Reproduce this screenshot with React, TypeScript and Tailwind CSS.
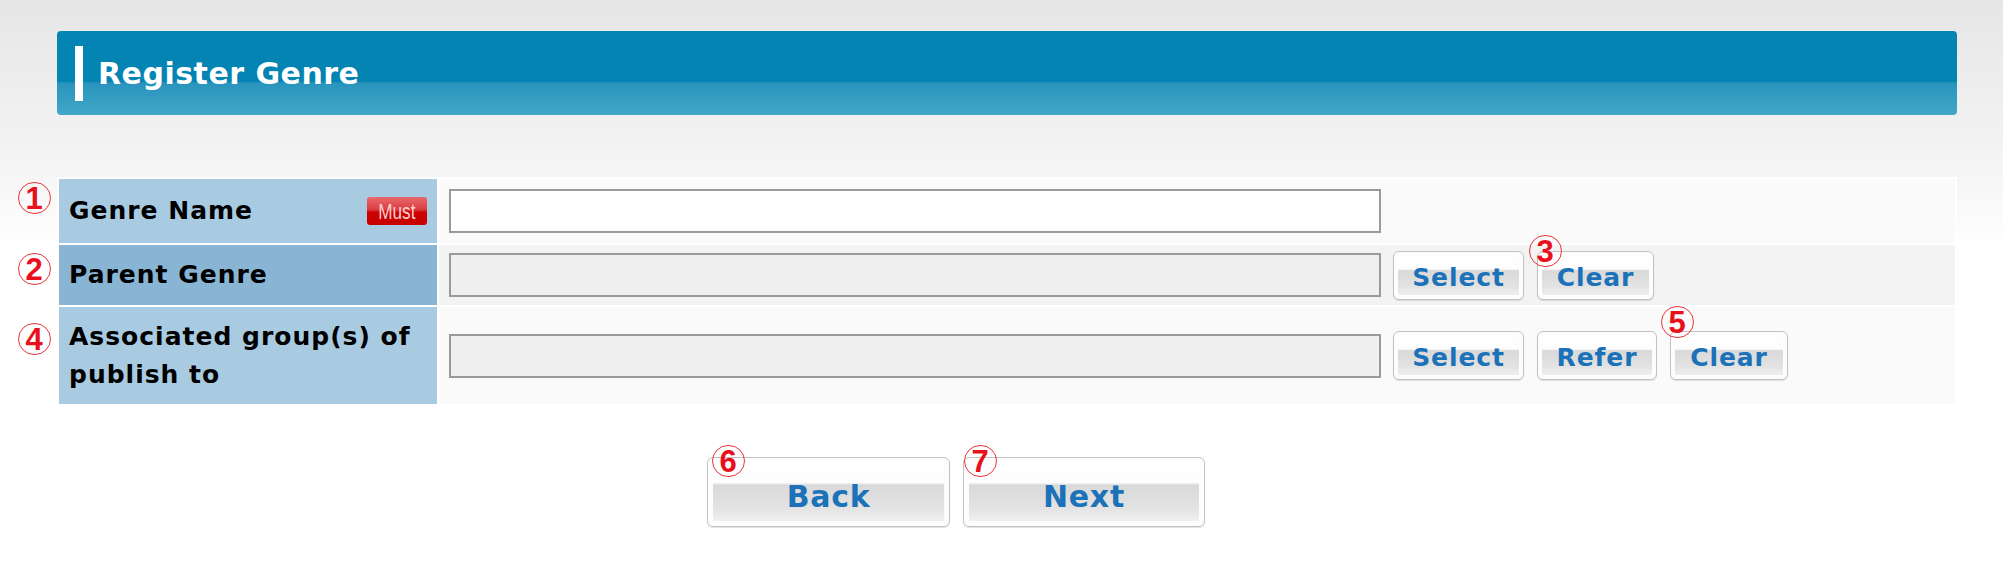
const BTN =
  "relative flex items-center justify-center rounded-[6px] border border-[#c2c2c2] bg-[linear-gradient(180deg,#ffffff_0%,#fdfdfd_36%,#d9d9d9_40%,#e2e2e2_72%,#f4f4f4_100%)] shadow-[inset_0_0_0_4px_#fdfdfd,0_1px_1px_rgba(0,0,0,0.12)] font-bold text-[#1c72b8]";

function Mark({ n, className }: { n: string; className: string }) {
  return (
    <span
      className={`absolute flex h-[32px] w-[33px] items-center justify-center rounded-full border border-[#e8343c] pt-[1px] font-['Liberation_Sans',sans-serif] text-[31px] font-bold leading-none text-[#e8101c] ${className}`}
    >
      {n}
    </span>
  );
}

function SmallButton({ label, width, mark }: { label: string; width: string; mark?: React.ReactNode }) {
  return (
    <button className={`${BTN} ${width} h-[49px] pt-[5px] text-[25px] tracking-[0.9px]`}>
      {mark}
      {label}
    </button>
  );
}

function Field({ readOnly }: { readOnly?: boolean }) {
  return (
    <input
      readOnly={readOnly}
      className={`h-[44px] w-[932px] border-2 border-[#9a9a9a] outline-none ${
        readOnly ? "bg-[#efefef]" : "bg-white"
      }`}
    />
  );
}

export default function App() {
  return (
    <div className="min-h-[587px] w-full bg-[linear-gradient(180deg,#e6e6e6_0px,#f5f5f5_170px,#fdfdfd_235px,#ffffff_250px)] pt-[31px] font-['DejaVu_Sans',sans-serif]">
      <div className="ml-[57px] flex h-[84px] w-[1900px] items-center rounded-[4px] bg-[linear-gradient(180deg,#0384b3_0%,#0384b3_60%,#2a94bd_62%,#42a7c8_100%)] pl-[18px]">
        <span className="h-[55px] w-[8px] bg-white" />
        <h1 className="ml-[15px] text-[30px] font-bold tracking-[0.5px] text-white">Register Genre</h1>
      </div>

      <div className="ml-[57px] mt-[62px] flex w-[1900px] flex-col gap-[2px] bg-white p-[2px] text-[25px] font-bold tracking-[1px] text-black">
        <div className="relative flex h-[64px] gap-[2px]">
          <Mark n="1" className="left-[-41px] top-[3px]" />
          <div className="flex w-[378px] items-center justify-between bg-[#a9cbe1] px-[10px]">
            <span>Genre Name</span>
            <span className="flex h-[28px] w-[60px] items-center justify-center rounded-[3px] bg-[linear-gradient(180deg,#e86a6e_0%,#dc3c40_45%,#cc0000_55%,#c80000_100%)]">
              <span className="inline-block scale-x-[0.78] font-['Liberation_Sans',sans-serif] text-[22px] font-normal tracking-normal text-[#fbd0d0]">
                Must
              </span>
            </span>
          </div>
          <div className="flex flex-1 items-center bg-[#fafafa] pl-[10px]">
            <Field />
          </div>
        </div>

        <div className="relative flex h-[60px] gap-[2px]">
          <Mark n="2" className="left-[-41px] top-[8px]" />
          <div className="flex w-[378px] items-center bg-[#88b5d4] px-[10px]">
            <span>Parent Genre</span>
          </div>
          <div className="flex flex-1 items-center bg-[#f3f3f3] pl-[10px]">
            <Field readOnly />
            <div className="ml-[12px] flex gap-[13px]">
              <SmallButton label="Select" width="w-[131px]" />
              <SmallButton
                label="Clear"
                width="w-[117px]"
                mark={<Mark n="3" className="left-[-9px] top-[-17px]" />}
              />
            </div>
          </div>
        </div>

        <div className="relative flex h-[97px] gap-[2px]">
          <Mark n="4" className="left-[-41px] top-[16px]" />
          <div className="flex w-[378px] items-center bg-[#a9cbe1] px-[10px] leading-[38px]">
            <span>Associated group(s) of publish to</span>
          </div>
          <div className="flex flex-1 items-center bg-[#fafafa] pl-[10px]">
            <Field readOnly />
            <div className="ml-[12px] flex gap-[13px]">
              <SmallButton label="Select" width="w-[131px]" />
              <SmallButton label="Refer" width="w-[120px]" />
              <SmallButton
                label="Clear"
                width="w-[118px]"
                mark={<Mark n="5" className="left-[-10px] top-[-26px]" />}
              />
            </div>
          </div>
        </div>
      </div>

      <div className="mt-[51px] flex gap-[13px] pl-[707px]">
        <button className={`${BTN} h-[70px] w-[243px] pt-[8px] text-[30px] tracking-[0.7px] shadow-[inset_0_0_0_5px_#fdfdfd,0_1px_1px_rgba(0,0,0,0.12)]`}>
          <Mark n="6" className="left-[4px] top-[-13px]" />
          Back
        </button>
        <button className={`${BTN} h-[70px] w-[242px] pt-[8px] text-[30px] tracking-[0.7px] shadow-[inset_0_0_0_5px_#fdfdfd,0_1px_1px_rgba(0,0,0,0.12)]`}>
          <Mark n="7" className="left-[0px] top-[-13px]" />
          Next
        </button>
      </div>
    </div>
  );
}
